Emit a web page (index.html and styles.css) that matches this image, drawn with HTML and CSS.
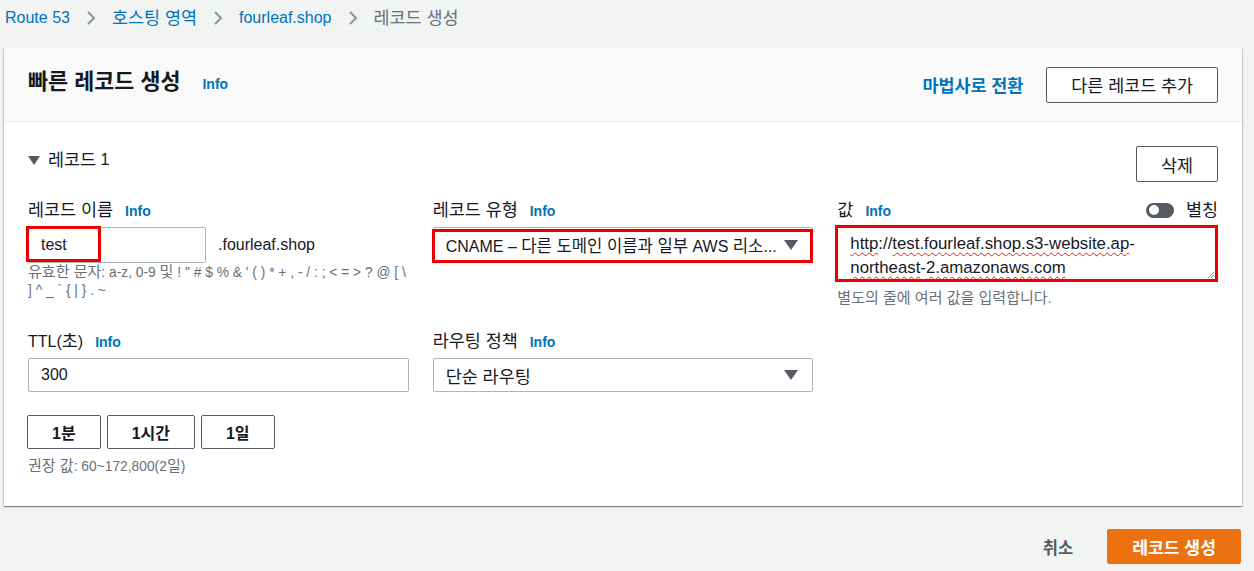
FILE: index.html
```html
<!DOCTYPE html>
<html lang="ko">
<head>
<meta charset="utf-8">
<title>레코드 생성</title>
<link rel="stylesheet" href="styles.css">
</head>
<body>
<nav class="crumbs">
  <a class="crumb">Route 53</a>
  <span class="sep"><svg width="10" height="16" viewBox="0 0 10 16"><polyline points="2,2 8,8 2,14" fill="none" stroke="#879596" stroke-width="2"/></svg></span>
  <a class="crumb k">호스팅 영역</a>
  <span class="sep"><svg width="10" height="16" viewBox="0 0 10 16"><polyline points="2,2 8,8 2,14" fill="none" stroke="#879596" stroke-width="2"/></svg></span>
  <a class="crumb">fourleaf.shop</a>
  <span class="sep"><svg width="10" height="16" viewBox="0 0 10 16"><polyline points="2,2 8,8 2,14" fill="none" stroke="#879596" stroke-width="2"/></svg></span>
  <span class="crumb current k">레코드 생성</span>
</nav>

<main class="card">
  <header class="card-head">
    <div class="title-wrap">
      <h1 class="title">빠른 레코드 생성</h1>
      <a class="info info-title">Info</a>
    </div>
    <div class="head-actions">
      <a class="wizard">마법사로 전환</a>
      <button class="btn btn-ko">다른 레코드 추가</button>
    </div>
  </header>

  <section class="card-body">
    <div class="record-head">
      <div class="record-title"><span class="caret"></span><span class="k">레코드</span>&nbsp;1</div>
      <button class="btn btn-ko">삭제</button>
    </div>

    <div class="grid row-one">
      <div class="field">
        <div class="label"><span class="k">레코드 이름</span><a class="info">Info</a></div>
        <div class="name-row">
          <div class="input-wrap">
            <div class="input name-input">test</div>
            <div class="mark mark-name"></div>
          </div>
          <span class="suffix">.fourleaf.shop</span>
        </div>
        <p class="hint hint-name"><span class="k">유효한 문자</span>: a-z, 0-9 <span class="k">및</span> ! " # $ % &amp; ' ( ) * + , - / : ; &lt; = &gt; ? @ [ \<br>] ^ _ ` { | } . ~</p>
      </div>

      <div class="field">
        <div class="label"><span class="k">레코드 유형</span><a class="info">Info</a></div>
        <div class="input-wrap">
          <div class="select"><span class="select-text">CNAME – <span class="ks">다른 도메인 이름과 일부</span> AWS <span class="ks">리소</span>...</span><span class="tri"></span></div>
          <div class="mark mark-select"></div>
        </div>
      </div>

      <div class="field">
        <div class="label label-split">
          <div class="label-left"><span class="k">값</span><a class="info">Info</a></div>
          <div class="alias"><span class="toggle"><span class="knob"></span></span><span class="k">별칭</span></div>
        </div>
        <div class="input-wrap">
          <div class="textarea"><span class="typo">http</span>://<span class="typo">test.fourleaf.shop.s3-website.ap</span>-<br><span class="typo">northeast</span>-<span class="typo">2.amazonaws.com</span></div>
          <svg class="grip" width="8" height="8" viewBox="0 0 8 8"><line x1="7" y1="1" x2="1" y2="7" stroke="#879596"/><line x1="7" y1="4" x2="4" y2="7" stroke="#879596"/></svg>
          <div class="mark mark-area"></div>
        </div>
        <p class="hint hint-area"><span class="k">별도의 줄에 여러 값을 입력합니다</span>.</p>
      </div>
    </div>

    <div class="grid row-two">
      <div class="field">
        <div class="label"><span>TTL(<span class="k">초</span>)</span><a class="info">Info</a></div>
        <div class="input ttl-input">300</div>
        <div class="ttl-buttons">
          <button class="btn btn-bold">1분</button>
          <button class="btn btn-bold">1시간</button>
          <button class="btn btn-bold">1일</button>
        </div>
        <p class="hint hint-ttl"><span class="k">권장 값</span>: 60~172,800(2<span class="k">일</span>)</p>
      </div>
      <div class="field">
        <div class="label"><span class="k">라우팅 정책</span><a class="info">Info</a></div>
        <div class="select select-plain"><span class="select-text k">단순 라우팅</span><span class="tri"></span></div>
      </div>
      <div class="field"></div>
    </div>
  </section>
</main>

<footer class="page-foot">
  <button class="cancel">취소</button>
  <button class="primary">레코드 생성</button>
</footer>
</body>
</html>
```

FILE: styles.css
```css
* { box-sizing: border-box; }

body {
  margin: 0;
  background: #f2f3f3;
  font-family: "Liberation Sans", "Noto Sans CJK KR", sans-serif;
  color: #16191f;
  font-size: 16px;
}

/* Korean runs: the CJK face runs a bit small next to the Latin face */
.k { font-size: 1.09em; }
.ks { font-size: 1.04em; }

.crumbs {
  display: flex;
  align-items: center;
  height: 36px;
  padding: 6px 0 6px 5px;
  line-height: 24px;
}
.crumb { color: #0073bb; }
.crumb.current { color: #687078; }
.sep { display: flex; align-items: center; padding: 0 16px; }

.card {
  margin: 12px 12px 0 4px;
  background: #fff;
  box-shadow: 0 1px 1px 0 rgba(0,28,36,.3), 1px 1px 1px 0 rgba(0,28,36,.15), -1px 1px 1px 0 rgba(0,28,36,.15);
}

.card-head {
  height: 74px;
  background: #fafafa;
  border-bottom: 1px solid #eaeded;
  padding: 0 24px;
  display: flex;
  align-items: center;
  justify-content: space-between;
}
.title-wrap { display: flex; align-items: baseline; margin-bottom: 5px; }
.title { margin: 0; font-size: 21.8px; font-weight: 700; line-height: 28px; }
.info { color: #0073bb; font-size: 14px; font-weight: 700; margin-left: 12px; }
.info-title { margin-left: 22px; }

.head-actions { display: flex; align-items: center; gap: 23px; }
.wizard { color: #0073bb; font-weight: 700; font-size: 17.4px; }

.btn {
  font-family: inherit;
  font-size: 16px;
  color: #16191f;
  background: #fff;
  border: 1px solid #545b64;
  border-radius: 2px;
  height: 36px;
  padding: 0 24px;
  cursor: pointer;
}
.btn-ko { font-size: 17.4px; }
.btn-bold { font-weight: 700; height: 34px; }

.card-body { padding: 24px 24px 30px; }

.record-head { display: flex; justify-content: space-between; align-items: flex-start; }
.record-title { display: flex; align-items: center; line-height: 24px; margin-top: 2px; }
.caret {
  width: 0; height: 0;
  border-left: 6px solid transparent;
  border-right: 6px solid transparent;
  border-top: 9px solid #545b64;
  margin-right: 8px;
}

.grid {
  display: grid;
  grid-template-columns: 1fr 1fr 1fr;
  column-gap: 24px;
}
.row-one { margin-top: 17px; }
.row-two { margin-top: 22px; }

.label {
  display: flex;
  align-items: baseline;
  line-height: 22px;
  height: 22px;
  margin-bottom: 6px;
}
.label-split { justify-content: space-between; align-items: center; }
.label-left { display: flex; align-items: baseline; }
.alias { display: flex; align-items: center; gap: 12px; }
.toggle {
  width: 28px; height: 15px;
  border-radius: 8px;
  background: #545b64;
  position: relative;
  display: inline-block;
}
.knob {
  position: absolute;
  left: 3px; top: 2.5px;
  width: 10px; height: 10px;
  border-radius: 50%;
  background: #fff;
}

.input-wrap { position: relative; }

.input {
  height: 36px;
  border: 1px solid #aab7b8;
  border-radius: 2px;
  padding: 0 12px;
  display: flex;
  align-items: center;
  background: #fff;
}
.name-row { display: flex; align-items: center; }
.name-input { width: 178px; }
.suffix { margin-left: 12px; }
.ttl-input { height: 34px; }

.select {
  height: 36px;
  border: 1px solid #aab7b8;
  border-radius: 2px;
  padding: 0 14px 0 12px;
  display: flex;
  align-items: center;
  justify-content: space-between;
  background: #fff;
}
.select-plain { height: 34px; }
.select-text { white-space: nowrap; }
.tri {
  width: 0; height: 0;
  border-left: 7px solid transparent;
  border-right: 7px solid transparent;
  border-top: 10px solid #545b64;
}

.textarea {
  height: 56px;
  border: 1px solid #aab7b8;
  border-radius: 2px;
  padding: 5px 12px 0;
  line-height: 24px;
  font-size: 16.8px;
  margin-top: -1px;
}
.typo { text-decoration: underline wavy #e02020; text-decoration-thickness: 1px; text-underline-offset: 3px; }
.grip { position: absolute; right: 3px; bottom: 3px; }

.mark { position: absolute; border: 3px solid #ee0000; pointer-events: none; }
.mark-name { left: -2px; top: -1px; width: 75px; height: 36px; }
.mark-select { left: -1px; right: 0; top: 2px; bottom: 0; }
.mark-area { left: -2px; right: 0; top: -1px; bottom: 0; }

.hint {
  margin: 0;
  font-size: 13.8px;
  line-height: 18px;
  color: #687078;
}
.hint-name { white-space: nowrap; }
.hint-area { margin-top: 7px; }

.ttl-buttons { display: flex; gap: 6px; margin-top: 23px; margin-left: -1px; }
.hint-ttl { margin-top: 8px; }

.page-foot {
  display: flex;
  justify-content: flex-end;
  align-items: center;
  gap: 34px;
  margin: 23px 13px 0 0;
}
.cancel {
  font-family: inherit;
  font-size: 16.5px;
  font-weight: 700;
  color: #545b64;
  background: none;
  border: none;
  padding: 0;
}
.primary {
  font-family: inherit;
  font-size: 17.2px;
  font-weight: 700;
  color: #fff;
  background: #ec7211;
  border: 1px solid #ec7211;
  border-radius: 2px;
  height: 35px;
  padding: 0 24px;
}
```
